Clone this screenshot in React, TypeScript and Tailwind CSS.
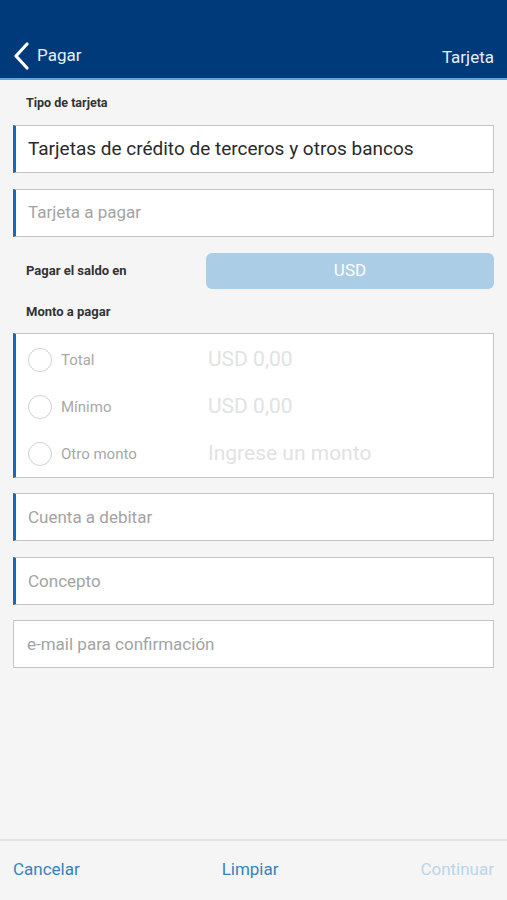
const font = { fontFamily: 'Roboto, "Liberation Sans", sans-serif' };

function Field({ text, accent = true, value = false }: { text: string; accent?: boolean; value?: boolean }) {
  return (
    <div
      className={`h-[48px] bg-white border border-[#c4c4c4] flex items-center ${accent ? 'border-l-[3px] border-l-[#1769b8] pl-[12px]' : 'pl-[13px]'} ${value ? 'text-[19px] text-[#2a2a2a]' : 'text-[17px] text-[#a3a3a3]'}`}
    >
      {text}
    </div>
  );
}

function RadioRow({ label, value }: { label: string; value: string }) {
  return (
    <div className="flex items-center h-[47px]">
      <div className="w-[24px] h-[24px] rounded-full border-[1.5px] border-[#d0d0d0] ml-[12px] shrink-0" />
      <div className="w-[148px] pl-[9px] text-[15px] text-[#a8a8a8]">{label}</div>
      <div className="text-[21px] text-[#e2e2e2] pl-[8px]">{value}</div>
    </div>
  );
}

export default function App() {
  return (
    <div className="w-[507px] h-[900px] bg-[#f5f5f5] flex flex-col" style={font}>
      <header className="h-[80px] bg-[#003a7a] border-b-2 border-b-[#5aa7df] flex items-end pb-[8px] px-[10px] text-white">
        <div className="flex items-center flex-1">
          <svg width="20" height="28" viewBox="0 0 20 28" className="ml-[1px]">
            <polyline points="16,2 5,14 16,26" fill="none" stroke="#ffffff" strokeWidth="3.2" strokeLinecap="round" strokeLinejoin="round" />
          </svg>
          <span className="text-[17px] ml-[6px] text-[#e8eef6]">Pagar</span>
        </div>
        <span className="text-[17px] text-[#e8eef6] pr-[3px]">Tarjeta</span>
      </header>

      <main className="flex-1 px-[13px] flex flex-col">
        <div className="text-[12.5px] font-bold text-[#333] pl-[13px] pt-[14px] pb-[12px]">Tipo de tarjeta</div>
        <Field text="Tarjetas de crédito de terceros y otros bancos" value />
        <div className="h-[16px]" />
        <Field text="Tarjeta a pagar" />

        <div className="flex items-center mt-[16px] h-[36px]">
          <div className="w-[193px] pl-[13px] text-[13px] font-bold text-[#333]">Pagar el saldo en</div>
          <div className="flex-1 h-full rounded-[6px] bg-[#abcde6] text-white text-[17px] flex items-center justify-center">USD</div>
        </div>

        <div className="text-[13px] font-bold text-[#333] pl-[13px] pt-[13px] pb-[12px]">Monto a pagar</div>
        <div className="bg-white border border-[#c4c4c4] border-l-[3px] border-l-[#1769b8] h-[145px] flex flex-col pt-[2px]">
          <RadioRow label="Total" value="USD 0,00" />
          <RadioRow label="Mínimo" value="USD 0,00" />
          <RadioRow label="Otro monto" value="Ingrese un monto" />
        </div>

        <div className="h-[15px]" />
        <Field text="Cuenta a debitar" />
        <div className="h-[16px]" />
        <Field text="Concepto" />
        <div className="h-[15px]" />
        <Field text="e-mail para confirmación" accent={false} />
      </main>

      <footer className="h-[60px] border-t-2 border-t-[#e2e2e2] flex items-center justify-between px-[13px] text-[17px] mb-[1px]">
        <span className="text-[#3583c0]">Cancelar</span>
        <span className="text-[#3583c0]">Limpiar</span>
        <span className="text-[#b9d6ea]">Continuar</span>
      </footer>
    </div>
  );
}
